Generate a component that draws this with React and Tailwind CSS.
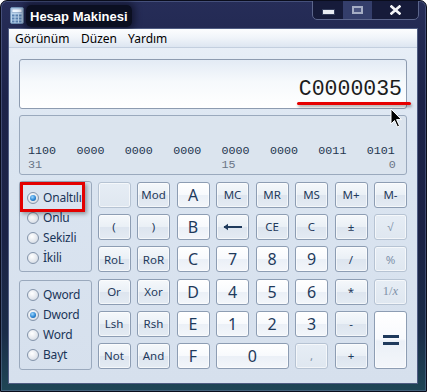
import React from "react";

const opCls =
  "border-[#8d9db3] bg-[linear-gradient(180deg,#f5f8fb_0%,#eaf0f6_48%,#dde5ef_52%,#e4ebf3_100%)] text-[11.5px]";
const digCls =
  "border-[#8d9db3] bg-[linear-gradient(180deg,#ffffff_0%,#f8fafd_48%,#ebf0f7_52%,#f3f6fa_100%)] text-[16px]";
const disCls =
  "border-[#b6c3d3] bg-[linear-gradient(180deg,#e6edf5_0%,#dfe7f0_100%)] text-[#7f91a9] text-[11.5px]";

function Btn({ label, kind = "op", className = "" }) {
  const k = kind === "op" ? opCls : kind === "dig" ? digCls : kind === "dis" ? disCls : "";
  return (
    <div
      className={
        "flex items-center justify-center rounded-[3px] border text-[#1f3a5c] leading-none shadow-[inset_0_0_0_1px_rgba(255,255,255,0.6)] " +
        k +
        " " +
        className
      }
    >
      {label}
    </div>
  );
}

function Radio({ label, checked }) {
  return (
    <div className="flex h-[20px] items-center">
      <div className="ml-[7px] flex h-[12px] w-[12px] items-center justify-center rounded-full border border-[#8494aa] bg-[radial-gradient(circle_at_40%_35%,#ffffff_0%,#e4e8ee_55%,#c9d0da_100%)]">
        {checked && (
          <div className="h-[6px] w-[6px] rounded-full bg-[radial-gradient(circle_at_40%_35%,#9fd8ff_0%,#2b86d4_55%,#0d4f94_100%)]" />
        )}
      </div>
      <span className="ml-[4px] text-[12px] tracking-[-0.2px] text-[#1a3558]">{label}</span>
    </div>
  );
}

const bits = ["1100", "0000", "0000", "0000", "0000", "0000", "0011", "0101"];

export default function App() {
  return (
    <div className="relative h-[392px] w-[427px] overflow-hidden rounded-t-[7px] border border-[#0a0d1c] bg-[linear-gradient(180deg,#262d58_0%,#1d2349_25%,#1b2245_60%,#1a2c48_85%,#1f4656_100%)] font-['Noto_Sans',sans-serif] shadow-[inset_0_0_0_1px_rgba(130,145,190,0.35)]">
      {/* title bar */}
      <div className="flex h-[27px] items-start">
        <div className="ml-[9px] mt-[6px]">
          <svg width="14" height="17" viewBox="0 0 14 17">
            <rect x="0.5" y="0.5" width="13" height="16" rx="1.5" fill="#b9d3ec" stroke="#6f8fb3" />
            <rect x="2" y="2" width="10" height="3.5" fill="#eef6ff" stroke="#7d9cc0" strokeWidth="0.6" />
            {[0, 1, 2].map((r) =>
              [0, 1, 2].map((c) => (
                <rect key={r + "-" + c} x={2 + c * 3.5} y={7.5 + r * 3} width="2.5" height="2" fill="#5b82b0" />
              ))
            )}
          </svg>
        </div>
        <div className="ml-[2px] mt-[4px] flex h-[22px] items-center rounded-[5px] bg-[#070a18]/85 px-[4px] shadow-[0_0_6px_3px_rgba(7,10,24,0.55)]">
          <span className="font-['Liberation_Sans',sans-serif] text-[13px] font-bold leading-none text-white">
            Hesap Makinesi
          </span>
        </div>
        <div className="flex-1" />
        <div className="mr-[7px] flex h-[20px] -mt-px overflow-hidden rounded-b-[5px] border border-[#5c668c] bg-[#161b3a]">
          <div className="flex w-[30px] items-center justify-center">
            <div className="mt-[4px] h-[4px] w-[11px] bg-[#e8ebf2] shadow-[0_0_0_1px_rgba(60,70,100,0.8)]" />
          </div>
          <div className="flex w-[29px] items-center justify-center bg-[#343e6b]">
            <div className="h-[8px] w-[11px] border-2 border-[#a5adc4] bg-[#4a5480]" />
          </div>
          <div className="flex w-[46px] items-center justify-center">
            <svg width="11" height="10" viewBox="0 0 11 10">
              <path d="M1.5 1.5 L9.5 8.5 M9.5 1.5 L1.5 8.5" stroke="#f2f3f7" strokeWidth="2.6" strokeLinecap="square" />
            </svg>
          </div>
        </div>
      </div>

      {/* client */}
      <div className="ml-[7px] flex h-[356px] w-[410px] flex-col border border-[#4f5c82] bg-[linear-gradient(180deg,#eaf0f8_0%,#dbe5f1_30%,#d6e0ed_100%)]">
        {/* menu */}
        <div className="flex h-[19px] items-center border-b border-[#c3cfdf] bg-[linear-gradient(180deg,#fcfdfe_0%,#f1f5fa_45%,#dde6f1_100%)] pl-[6px] pt-[2px] text-[12px] text-black">
          <span className="w-[66px]">Görünüm</span>
          <span className="w-[47px]">Düzen</span>
          <span>Yardım</span>
        </div>

        {/* body */}
        <div className="flex flex-col px-[10px] pt-[11px]">
          {/* display */}
          <div className="flex h-[50px] items-end justify-end rounded-[3px] border border-[#8d9bb0] bg-[linear-gradient(180deg,#e3ebf5_0%,#f6f9fc_45%,#ffffff_100%)] pb-[8px] pr-[4px]">
            <span className="font-['Liberation_Mono',monospace] text-[21.5px] leading-none text-[#1c1c1c]">
              C0000035
            </span>
          </div>

          {/* binary */}
          <div className="mt-[6px] h-[60px] rounded-[3px] border border-[#9aa9bd] bg-[#dbe4ee] pl-[8px] pt-[28px] font-['Liberation_Mono',monospace] text-[11.7px] leading-[14px]">
            <div className="grid grid-cols-[repeat(8,48.4px)] text-[#24364f]">
              {bits.map((b, i) => (
                <span key={i}>{b}</span>
              ))}
            </div>
            <div className="grid grid-cols-[repeat(8,48.4px)] text-[#6a7586]">
              <span>31</span>
              <span />
              <span />
              <span />
              <span>15</span>
              <span />
              <span />
              <span className="w-[29px] text-right">0</span>
            </div>
          </div>

          {/* lower section */}
          <div className="mt-[6px] flex">
            <div className="flex w-[73px] flex-col">
              <div className="h-[91px] rounded-[3px] border border-[#9aa9bd] pt-[6px]">
                <Radio label="Onaltılı" checked />
                <Radio label="Onlu" />
                <Radio label="Sekizli" />
                <Radio label="İkili" />
              </div>
              <div className="mt-[8px] h-[90px] rounded-[3px] border border-[#9aa9bd] pt-[4px]">
                <Radio label="Qword" />
                <Radio label="Dword" checked />
                <Radio label="Word" />
                <Radio label="Bayt" />
              </div>
            </div>

            <div className="ml-[6px] mt-[1px] grid grid-cols-[repeat(8,33px)] grid-rows-[repeat(6,26px)] gap-x-[6.5px] gap-y-[6.2px]">
              <Btn label="" kind="dis" />
              <Btn label="Mod" />
              <Btn label="A" kind="dig" />
              <Btn label="MC" />
              <Btn label="MR" />
              <Btn label="MS" />
              <Btn label="M+" />
              <Btn label="M-" />

              <Btn label="(" />
              <Btn label=")" />
              <Btn label="B" kind="dig" />
              <Btn
                label={
                  <svg width="20" height="8" viewBox="0 0 20 8">
                    <path d="M1 4 H19" stroke="#1f3a5c" strokeWidth="2" />
                    <path d="M0.5 4 L5 0.8 V7.2 Z" fill="#1f3a5c" />
                  </svg>
                }
              />
              <Btn label="CE" className="text-[10.5px]" />
              <Btn label="C" />
              <Btn label="±" />
              <Btn label="√" kind="dis" />

              <Btn label="RoL" />
              <Btn label="RoR" />
              <Btn label="C" kind="dig" />
              <Btn label="7" kind="dig" />
              <Btn label="8" kind="dig" />
              <Btn label="9" kind="dig" />
              <Btn label="/" />
              <Btn label="%" kind="dis" />

              <Btn label="Or" />
              <Btn label="Xor" />
              <Btn label="D" kind="dig" />
              <Btn label="4" kind="dig" />
              <Btn label="5" kind="dig" />
              <Btn label="6" kind="dig" />
              <Btn label="*" />
              <Btn
                label={
                  <span className="font-['Liberation_Serif',serif] text-[12.5px]">
                    1/<i>x</i>
                  </span>
                }
                kind="dis"
              />

              <Btn label="Lsh" />
              <Btn label="Rsh" />
              <Btn label="E" kind="dig" />
              <Btn label="1" kind="dig" />
              <Btn label="2" kind="dig" />
              <Btn label="3" kind="dig" />
              <Btn label="-" />
              <Btn
                label={
                  <div className="flex flex-col gap-[4px]">
                    <div className="h-[3px] w-[16px] bg-[#1f3a5c]" />
                    <div className="h-[3px] w-[16px] bg-[#1f3a5c]" />
                  </div>
                }
                kind="dig"
                className="row-span-2"
              />

              <Btn label="Not" />
              <Btn label="And" />
              <Btn label="F" kind="dig" />
              <Btn label="0" kind="dig" className="col-span-2" />
              <Btn label="," kind="dis" />
              <Btn label="+" />
            </div>
          </div>
        </div>
      </div>

      {/* annotations */}
      <div className="absolute left-[296px] top-[101px] h-[3px] w-[114px] rounded-full bg-[#e60000] shadow-[1px_2px_3px_rgba(0,0,0,0.35)]" />
      <div className="absolute left-[19px] top-[181px] h-[30px] w-[65px] border-[3px] border-[#e30000] shadow-[2px_2px_4px_rgba(0,0,0,0.35)]" />
      <div className="absolute left-[389px] top-[107px]">
        <svg width="13" height="20" viewBox="0 0 13 20">
          <path d="M1 1 V16 L4.5 12.5 L7.5 19 L9.5 18 L6.6 11.6 H11.5 Z" fill="#000" stroke="#fff" strokeWidth="1" strokeLinejoin="round" />
        </svg>
      </div>
    </div>
  );
}
